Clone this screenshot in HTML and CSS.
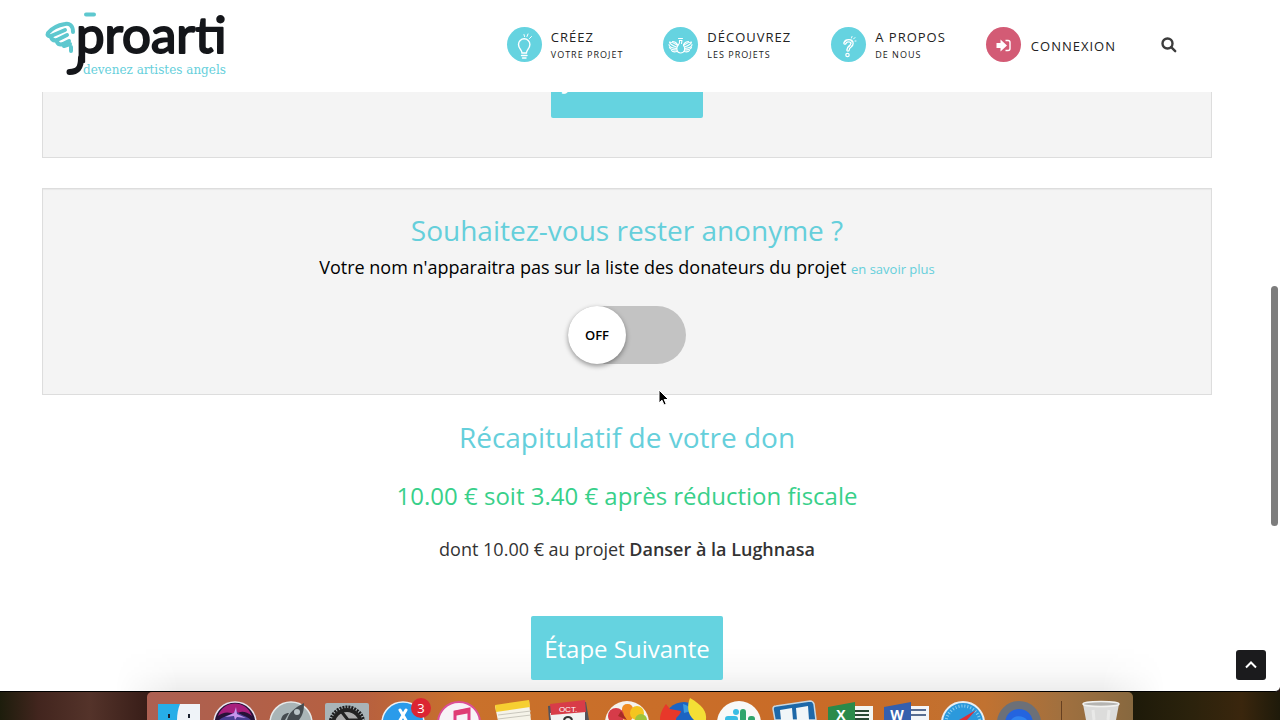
FILE: index.html
```html
<!DOCTYPE html>
<html lang="fr">
  <head>
    <meta charset="utf-8" />
    <title>proarti</title>
    <meta name="viewport" content="width=device-width, initial-scale=1" />
    <link rel="stylesheet" href="styles.css">
  </head>

  <body>
    <div class="window">
      <header class="header">
        <a class="logo" href="#" aria-label="proarti">
          <svg width="190" height="84" viewBox="40 0 190 84">
            <!-- wing -->
            <g fill="none" stroke="#5ec8cf" stroke-width="4" stroke-linecap="round" stroke-linejoin="round">
              <path d="M73 32c0-7-4-9-8-8-6 1-13 4-17 9-1 2 0 4 3 3l14-6" />
              <path d="M51 37c1 3 3 4 6 3l10-5M57 42c1 2 3 3 6 2l6-3M64 46l6-2M71 47v4" />
              <path d="M86 14.500h8" />
            </g>
            <text class="logo-name" x="76" y="53">proarti</text>
            <path d="M81 58c0 10-3 14-11.500 14" fill="none" stroke="#14161a" stroke-width="6" stroke-linecap="round" />
            <text class="logo-tag" x="83" y="74">devenez artistes angels</text>
          </svg>
        </a>
        <nav class="nav">
          <a class="nav-item" href="#">
            <span class="nav-icon">
              <svg width="35" height="35" viewBox="0 0 35 35" fill="none" stroke="#fff" stroke-width="1.400" stroke-linecap="round">
                <path d="M15 26c0-3-3.500-4.500-3.500-8.500a5.700 5.700 0 0 1 11.400 0c0 4-3.500 5.500-3.500 8.500z" />
                <path d="M14.500 28.500h5.500M15.500 31h3.500" />
                <path d="M17.500 9.500l-.5-2M20 9.500l1-2.500M22.500 11.500l2-2" stroke-width="1" />
              </svg>
            </span>
            <span class="nav-text">CRÉEZ<small>VOTRE PROJET</small></span>
          </a>
          <a class="nav-item" href="#">
            <span class="nav-icon">
              <svg width="35" height="35" viewBox="0 0 35 35" fill="none" stroke="#fff" stroke-width="1.100" stroke-linecap="round" stroke-linejoin="round">
                <!-- feathers of both wings, then the body -->
                <path d="M14.500 18.500c-2-1-4-3.500-8-3.500 0 2 3 3.500 7 5M6 17.500c0 2 3 3.500 7.500 4M6.500 20.500c1 2 4 2.500 7 2.500M8.500 23.500c1 1.500 3.500 1.500 5.500 1M9.500 14.500c2 0 4 1.500 5 3" />
                <path d="M20.500 18.500c2-1 4-3.500 8-3.500 0 2-3 3.500-7 5M29 17.500c0 2-3 3.500-7.500 4M28.500 20.500c-1 2-4 2.500-7 2.500M26.500 23.500c-1 1.500-3.500 1.500-5.500 1M25.500 14.500c-2 0-4 1.500-5 3" />
                <path d="M16.500 13.500c.5 2 0 3.500-1.500 5-2 2.500-1.500 7.500 2.500 7.500s5.500-4.500 3-7.500" />
                <path d="M16.500 13.500h2.500l-.5 3M15.500 11.500h4" />
              </svg>
            </span>
            <span class="nav-text">DÉCOUVREZ<small>LES PROJETS</small></span>
          </a>
          <a class="nav-item" href="#">
            <span class="nav-icon">
              <svg width="35" height="35" viewBox="0 0 35 35" fill="none" stroke-linecap="round" stroke-linejoin="round">
                <path d="M14 16c1-3 7-3 7 .5 0 3-4 3-4 6.500" stroke="#fff" stroke-width="3.600" />
                <path d="M14 16c1-3 7-3 7 .5 0 3-4 3-4 6.500" stroke="#65d3e0" stroke-width="1" />
                <circle cx="16.500" cy="28" r="1.700" stroke="#fff" stroke-width="1.200" />
                <path d="M20.500 11l.5-1.500M22.500 12l1.500-1.500M24 14h1" stroke="#fff" />
              </svg>
            </span>
            <span class="nav-text">A PROPOS<small>DE NOUS</small></span>
          </a>
          <a class="nav-item nav-login" href="#">
            <span class="nav-icon">
              <svg width="35" height="35" viewBox="0 0 35 35">
                <path d="M10.500 16h4v-3.500l6.500 6-6.500 6V21h-4z" fill="#fff" />
                <path d="M19.500 13.500h2.500a2 2 0 0 1 2 2v6a2 2 0 0 1-2 2h-2.500" fill="none" stroke="#fff" stroke-width="1.400" />
              </svg>
            </span>
            <span class="nav-text">CONNEXION</span>
          </a>
          <button class="search" type="button" aria-label="Rechercher">
            <svg width="16" height="16" viewBox="0 0 16 16" fill="none" stroke="#3c3c3c" stroke-width="2.400">
              <circle cx="6.500" cy="6.500" r="5" />
              <path d="M10.200 10.200l4 4" stroke-linecap="round" />
            </svg>
          </button>
        </nav>
      </header>

      <main class="content">
        <section class="panel panel-top">
          <button class="btn btn-confirm" type="button">Je confirme</button>
        </section>

        <section class="panel panel-anonymous">
          <h2 class="title">Souhaitez-vous rester anonyme ?</h2>
          <p class="lead">Votre nom n'apparaitra pas sur la liste des donateurs du projet <a href="#">en savoir plus</a></p>
          <label class="switch">
            <input type="checkbox" aria-label="Rester anonyme" />
            <span class="knob">OFF</span>
          </label>
        </section>

        <section class="recap">
          <h2 class="title">Récapitulatif de votre don</h2>
          <p class="amount">10.00 € soit 3.40 € après réduction fiscale</p>
          <p class="detail">dont 10.00 € au projet <strong>Danser à la Lughnasa</strong></p>
          <button class="btn" type="submit">Étape Suivante</button>
        </section>
      </main>

      <button class="to-top" type="button" aria-label="Haut de page">
        <svg width="14" height="10" viewBox="0 0 14 10" fill="none" stroke="#fff" stroke-width="2">
          <path d="M2 7.500l5-5 5 5" />
        </svg>
      </button>
      <div class="scrollbar"></div>
      <svg class="cursor" width="12" height="18" viewBox="0 0 12 18">
        <path d="M1 1v13l3-2.800 2 4.800 2.200-1-2-4.500h4.300z" fill="#000" stroke="#fff" />
      </svg>
    </div>

    <div class="desktop">
      <div class="dock">
        <!-- finder -->
        <svg class="app" viewBox="0 0 56 28">
          <path d="M7 12h42v16H7z" fill="#eff3f8" />
          <path d="M7 12h22c-2 5-3 10-3 16H7z" fill="#27aee8" />
          <path d="M18 22v4M38 22v4" stroke="#1a2230" stroke-width="2" />
        </svg>
        <!-- siri -->
        <svg class="app" viewBox="0 0 56 28">
          <circle cx="28" cy="31" r="21" fill="#271238" stroke="#e9e4ee" stroke-width="1.500" />
          <path d="M11 24c5-15 27-18 34 0-7-6-13-5-17-1-6-4-12-3-17 1z" fill="#a81f7d" />
          <path d="M12 28c8-6 14-5 17-9 4 4 9 4 15 9z" fill="#4a3f93" />
          <path d="M29 15l1 7 9 4-9-1-2 3-1-4-9 1 9-4z" fill="#c795ec" />
        </svg>
        <!-- launchpad -->
        <svg class="app" viewBox="0 0 56 28">
          <circle cx="28" cy="31" r="21" fill="#a9b5b7" stroke="#e6e9e9" stroke-width="1.500" />
          <path d="M24 28c2-7 7-12 17-17 0 7-1 12-5 17zM18 28c1-5 4-7 8-7l-4 7z" fill="#454c50" />
          <circle cx="34" cy="20" r="3" fill="#b9c4c6" />
        </svg>
        <!-- system preferences -->
        <svg class="app" viewBox="0 0 56 28">
          <rect x="6" y="11" width="44" height="20" rx="2" fill="#a9b4b8" />
          <circle cx="28" cy="32" r="17" fill="#bcc2c4" stroke="#1b1c1e" stroke-width="3" stroke-dasharray="2 1" />
          <circle cx="28" cy="32" r="14" fill="#aaa" stroke="#222" stroke-width="4" />
          <path d="M22 19l7 9M28 28h12" stroke="#222" stroke-width="3" />
        </svg>
        <!-- app store -->
        <svg class="app" viewBox="0 0 56 28">
          <circle cx="28" cy="31" r="21" fill="#2a9bea" stroke="#e9f1f7" stroke-width="1.500" />
          <path d="M25 18l7 12M31 18l-7 12" stroke="#fff" stroke-width="3" stroke-linecap="round" />
          <circle cx="46" cy="16" r="10" fill="#dc2532" />
          <text class="badge" x="46" y="21">3</text>
        </svg>
        <!-- itunes -->
        <svg class="app" viewBox="0 0 56 28">
          <circle cx="28" cy="31" r="21" fill="#f7f3f7" stroke="#dc4f97" stroke-width="2" />
          <path d="M24 29V20l14-3v12" fill="none" stroke="#df3d83" stroke-width="3" />
          <path d="M23 19l16-3v5l-16 3z" fill="#df3d74" />
        </svg>
        <!-- notes -->
        <svg class="app" viewBox="0 0 56 28">
          <path d="M8 14l34-5 2 20H11z" fill="#f5f3e9" />
          <path d="M8 13l34-5 1 7-34 5z" fill="#f6cf31" />
          <path d="M11 23l33-4M11 27l33-4" stroke="#c9c7bd" stroke-width="1" />
        </svg>
        <!-- calendar -->
        <svg class="app" viewBox="0 0 56 28">
          <path d="M5 14l38-4 3 18H6z" fill="#53525a" />
          <path d="M7 21l35-2v9H8z" fill="#f2f2f2" />
          <path d="M7 12l35-4 1 12-35 3z" fill="#d83c48" />
          <text class="month" x="25" y="20">OCT.</text>
          <path d="M21 28c1-4 7-4 8 0" fill="none" stroke="#333" stroke-width="2" />
        </svg>
        <!-- photos -->
        <svg class="app" viewBox="0 0 56 28">
          <circle cx="28" cy="31" r="22" fill="#f4f2ee" />
          <rect x="23" y="12" width="11" height="17" rx="5" fill="#f18d24" />
          <circle cx="17" cy="24" r="8" fill="#d63b49" />
          <circle cx="38" cy="21" r="7" fill="#f4c51f" />
          <circle cx="42" cy="28" r="6" fill="#9ec33c" />
          <path d="M22 19l6 9-9-4z" fill="#a72c25" />
        </svg>
        <!-- firefox -->
        <svg class="app" viewBox="0 0 56 28">
          <circle cx="29" cy="30" r="20" fill="#1c64c2" />
          <path d="M28 12c4 1 7 3 8 7l-7 2z" fill="#3a9ade" />
          <path d="M5 28c0-7 3-12 6-16l4 5 11 2c-1 5-5 5-5 9z" fill="#e8382a" />
          <path d="M35 6c12 7 17 13 16 22H39c-7-6-7-15-4-22z" fill="#f4df35" />
        </svg>
        <!-- slack -->
        <svg class="app" viewBox="0 0 56 28">
          <circle cx="28" cy="31" r="22" fill="#f8f9f8" />
          <g stroke-width="6" stroke-linecap="round">
            <path d="M17 27h7M25 20h0" stroke="#39bce4" />
            <path d="M32 20v7M40 27h1" stroke="#2fa56c" />
          </g>
        </svg>
        <!-- trello -->
        <svg class="app" viewBox="0 0 56 28">
          <path d="M6 17q0-3 3-3l34-5q3 0 4 3l2 16H8z" fill="#1d68a8" stroke="#c7d7e1" stroke-width="1.500" />
          <path d="M13 18l12-2 1 12H14zM29 16l12-2 1 14H30z" fill="#f1f6f8" />
        </svg>
        <!-- excel -->
        <svg class="app" viewBox="0 0 56 28">
          <path d="M28 14h22v14H28z" fill="#f3f5f2" />
          <path d="M32 19h14M32 23h14M32 27h14" stroke="#294733" stroke-width="2" />
          <path d="M5 15l27-5v18H5z" fill="#2b8a4a" />
          <text class="office" x="18" y="28">X</text>
        </svg>
        <!-- word -->
        <svg class="app" viewBox="0 0 56 28">
          <path d="M28 14h22v14H28z" fill="#f4f5f8" />
          <path d="M32 18h15M32 23h15" stroke="#26406d" stroke-width="1.500" />
          <path d="M5 15l27-5v18H5z" fill="#355fae" />
          <text class="office" x="18" y="28">W</text>
        </svg>
        <!-- safari -->
        <svg class="app" viewBox="0 0 56 28">
          <circle cx="28" cy="31" r="21" fill="#2b99dc" stroke="#e9eff3" stroke-width="2" />
          <circle cx="28" cy="31" r="17" fill="none" stroke="#8ed0f0" stroke-width="3" stroke-dasharray="1 2" />
          <path d="M24 28l17-10-9 10z" fill="#dc3038" />
        </svg>
        <!-- screen recorder -->
        <svg class="app" viewBox="0 0 56 28">
          <circle cx="28" cy="31" r="18" fill="#2464df" stroke="#6c7078" stroke-width="8" />
          <path d="M20 28c4-5 12-5 16 0z" fill="#2f83f0" />
        </svg>
        <span class="dock-line"></span>
        <!-- trash -->
        <svg class="app" viewBox="0 0 56 28">
          <path d="M10 12h36l-3 16H13z" fill="#dcdcdb" />
          <ellipse cx="28" cy="12" rx="18" ry="2.500" fill="#b5b4b1" stroke="#f2f2f0" stroke-width="1.500" />
          <path d="M20 18l1 10M36 18l-1 10" stroke="#e9e9e8" stroke-width="3" />
        </svg>
      </div>
    </div>
  </body>
</html>
```

FILE: styles.css
```css
* {
  box-sizing: border-box;
}
body {
  margin: 0;
  height: 100vh;
  display: flex;
  flex-direction: column;
  overflow: hidden;
  background: #20100c;
  color: #333;
  font-family: "Open Sans", "Noto Sans", sans-serif;
}
a {
  color: #65cfdb;
  text-decoration: none;
}
button {
  border: 0;
  font-family: inherit;
  cursor: pointer;
}

.window {
  position: relative;
  z-index: 0;
  flex: 1;
  min-height: 0;
  overflow: hidden;
  background: #fff;
  border-bottom: 1px solid #000;
  border-bottom-right-radius: 5px;
}
/* shade of the dock on the page */
.window::after {
  content: "";
  position: absolute;
  z-index: -1;
  left: 9%;
  right: 9%;
  bottom: 0;
  height: 44px;
  background: linear-gradient(rgba(0, 0, 0, 0), rgba(0, 0, 0, 0.02) 50%, rgba(0, 0, 0, 0.07));
  mask-image: linear-gradient(90deg, transparent, #000 6%, #000 94%, transparent);
}

/* header */
.header {
  position: absolute;
  z-index: 2;
  top: 0;
  left: 0;
  right: 0;
  height: 92px;
  padding: 0 103px 0 40px;
  display: flex;
  justify-content: space-between;
  background: #fff;
}
.logo-name {
  font-family: "Lato", sans-serif;
  font-size: 51px;
  fill: #14161a;
  stroke: #14161a;
  stroke-width: 2px;
  stroke-linejoin: round;
}
.logo-tag {
  font-family: "DejaVu Serif", serif;
  font-size: 12px;
  fill: #65cfdb;
}
.nav {
  display: flex;
  align-items: center;
  gap: 40px;
  height: 88px;
}
.nav-item {
  display: flex;
  align-items: center;
  gap: 9px;
  color: #222;
}
.nav-login {
  gap: 10px;
}
.nav-icon {
  width: 35px;
  height: 35px;
  border-radius: 50%;
  background: #65d3e0;
}
.nav-login .nav-icon {
  background: #d35b75;
}
.nav-text {
  padding-top: 3px;
  font-size: 13px;
  line-height: 18px;
  letter-spacing: 1px;
}
.nav-text small {
  display: block;
  font-size: 9px;
}
.search {
  display: flex;
  margin: 2px 0 0 5px;
  padding: 0;
  background: none;
}

/* content */
.content {
  padding: 0 68px 0 42px;
  text-align: center;
}
.panel {
  margin-bottom: 30px;
  background: #f4f4f4;
  border: 1px solid #ddd;
}
.panel-top {
  padding: 39px 20px;
}
.panel-anonymous {
  padding: 20px 20px 30px;
  box-shadow: inset 0 1px 1px rgba(0, 0, 0, 0.05);
}
.title {
  margin: 0;
  color: #65cfdb;
  font-size: 28px;
  font-weight: 400;
  line-height: 42px;
}
.lead {
  margin: 0 0 21px;
  color: #000;
  font-size: 18px;
  line-height: 32px;
}
.lead a {
  font-size: 13px;
}
.btn {
  display: block;
  margin: 0 auto;
  padding: 0 13px;
  height: 64px;
  border-radius: 2px;
  background: #65d3e0;
  color: #fff;
  font-size: 24px;
}
.btn-confirm {
  width: 152px;
  height: 78px;
  padding: 0;
}

.switch {
  display: flex;
  width: 118px;
  height: 58px;
  margin: 0 auto;
  border-radius: 29px;
  background: #c3c3c3;
  cursor: pointer;
}
.switch input {
  appearance: none;
  width: 0;
  height: 0;
  margin: 0;
}
.switch input:checked + .knob {
  margin-left: auto;
}
.knob {
  width: 58px;
  border-radius: 50%;
  background: #fff;
  box-shadow: 0 2px 5px rgba(0, 0, 0, 0.4);
  color: #000;
  font-size: 13px;
  font-weight: 600;
  line-height: 58px;
}

.recap {
  margin-top: -9px;
}
.amount {
  margin: 20px 0;
  color: #38d08a;
  font-size: 24px;
  line-height: 36px;
}
.detail {
  margin: 0 0 52px;
  font-size: 18px;
  line-height: 30px;
}
.detail strong {
  font-weight: 600;
}

/* things over the page */
.to-top {
  position: absolute;
  right: 14px;
  bottom: 11px;
  width: 30px;
  height: 30px;
  padding: 0;
  border-radius: 3px;
  background: #1b1b1d;
}
.scrollbar {
  position: absolute;
  top: 286px;
  right: 2px;
  width: 7px;
  height: 240px;
  border-radius: 4px;
  background: #7d7d7d;
}
.cursor {
  position: absolute;
  top: 389px;
  left: 658px;
}

/* desktop and dock */
.desktop {
  height: 28px;
  background: linear-gradient(90deg, #1d1d0c, #42251e 3%, #54332a 7%, #351b16 12%, #1c1909 88%, #2b220c 93%, #3a260d 97%, #1e1a0a);
}
.dock {
  width: fit-content;
  height: 28px;
  margin: 0 auto;
  padding: 0 4px;
  display: flex;
  border-radius: 5px 5px 0 0;
  background: linear-gradient(90deg, #ac6052, #b7603f 22%, #c9712b 32%, #c96b27 70%, #c17231 85%, #a0703f 93%, #87683f);
}
.app {
  width: 56px;
  height: 28px;
}
.dock-line {
  width: 1px;
  margin: 9px 11px 0 14px;
  background: #664021;
}
.badge {
  font-size: 13px;
  fill: #fff;
  text-anchor: middle;
}
.month {
  font-family: "Liberation Sans", sans-serif;
  font-size: 8px;
  fill: #fff;
  text-anchor: middle;
}
.office {
  font-size: 14px;
  font-weight: 700;
  fill: #fff;
  text-anchor: middle;
}
```
